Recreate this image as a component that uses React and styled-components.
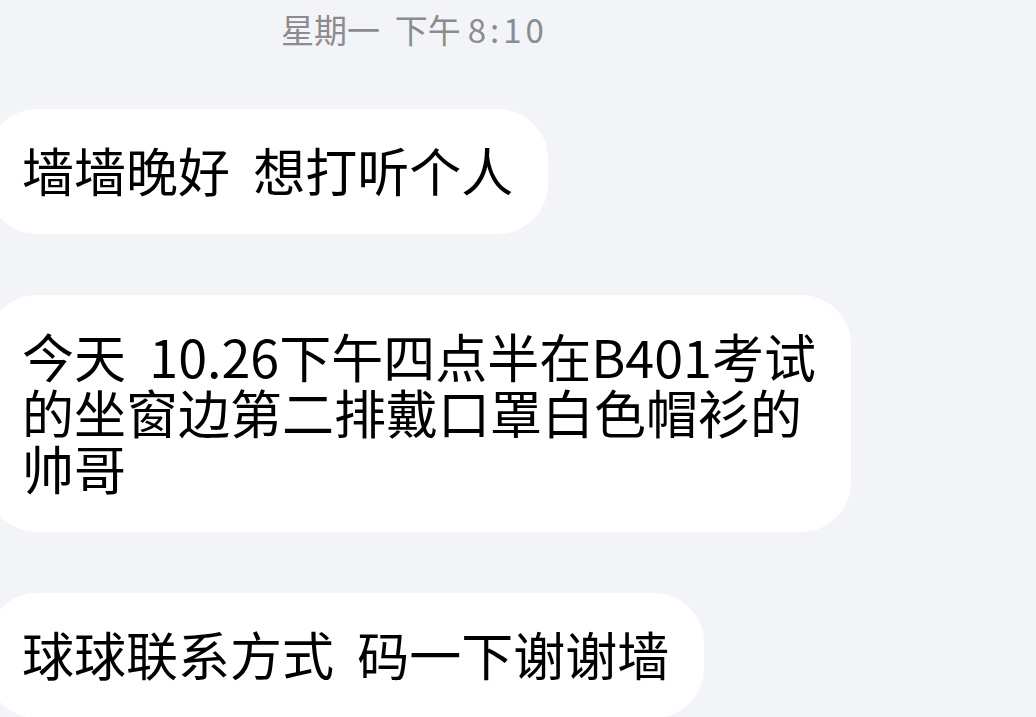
import React from "react";
import styled, { createGlobalStyle } from "styled-components";

const GlobalStyle = createGlobalStyle`
  html, body {
    margin: 0;
    padding: 0;
    background: #f3f4f8;
  }
  body {
    font-family: "Noto Sans CJK SC", "Noto Sans", sans-serif;
    overflow: hidden;
  }
`;

const Thread = styled.div`
  width: 1036px;
  height: 717px;
  display: flex;
  flex-direction: column;
  align-items: flex-start;
  gap: 61px;
  overflow: hidden;
  background: #f3f4f8;
`;

const TimeStamp = styled.div`
  align-self: stretch;
  padding: 9px 0 0 281px;
  margin-bottom: -1px;
  height: 40px;
  font-size: 33px;
  line-height: 40px;
  color: #8b8b90;
  white-space: pre;
`;

const Clock = styled.span`
  margin-left: 7px;
  letter-spacing: 4px;
`;

const Bubble = styled.div`
  margin-left: -13px;
  padding: 33px 35px 36px;
  background: #ffffff;
  border-radius: 50px;
  font-size: 52px;
  line-height: 56px;
  color: #000000;
  white-space: pre;
`;

const messages = [
  "墙墙晚好  想打听个人",
  "今天  10.26下午四点半在B401考试\n的坐窗边第二排戴口罩白色帽衫的\n帅哥",
  "球球联系方式  码一下谢谢墙",
];

const App = () => {
  return (
    <>
      <GlobalStyle />
      <Thread>
        <TimeStamp>
          星期一  下午<Clock>8:10</Clock>
        </TimeStamp>
        {messages.map((text, index) => (
          <Bubble key={index}>{text}</Bubble>
        ))}
      </Thread>
    </>
  );
};

export default App;
